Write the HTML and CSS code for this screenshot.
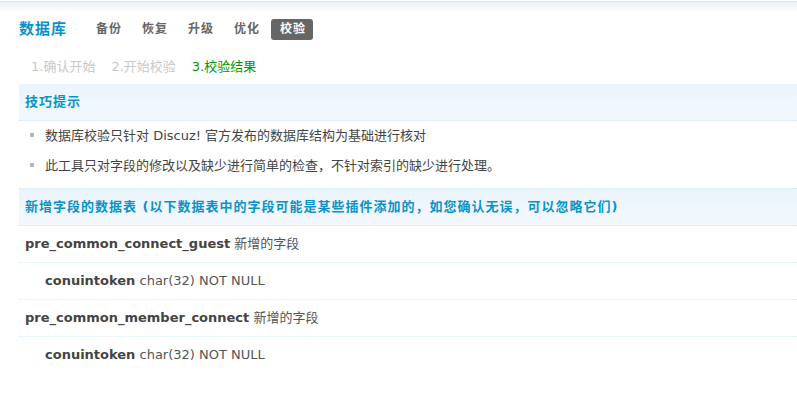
FILE: index.html
```html
<!DOCTYPE html>
<html lang="zh-CN">
<head>
<meta charset="utf-8">
<title>数据库 - 校验</title>
<link rel="stylesheet" href="styles.css">
</head>
<body>
<div class="topband"></div>
<div class="container">
  <div class="itemtitle">
    <h3 class="title">数据库</h3>
    <ul class="tabs">
      <li><a class="tab" href="#">备份</a></li>
      <li><a class="tab" href="#">恢复</a></li>
      <li><a class="tab" href="#">升级</a></li>
      <li><a class="tab" href="#">优化</a></li>
      <li><a class="tab current" href="#">校验</a></li>
    </ul>
  </div>
  <ul class="steps">
    <li class="step">1.确认开始</li>
    <li class="step">2.开始校验</li>
    <li class="step done">3.校验结果</li>
  </ul>
  <div class="partition first">技巧提示</div>
  <ul class="tips">
    <li>数据库校验只针对 Discuz! 官方发布的数据库结构为基础进行核对</li>
    <li>此工具只对字段的修改以及缺少进行简单的检查，不针对索引的缺少进行处理。</li>
  </ul>
  <div class="partition second">新增字段的数据表 (以下数据表中的字段可能是某些插件添加的，如您确认无误，可以忽略它们)</div>
  <div class="row"><b>pre_common_connect_guest</b> 新增的字段</div>
  <div class="row sub"><b>conuintoken</b> char(32) NOT NULL</div>
  <div class="row"><b>pre_common_member_connect</b> 新增的字段</div>
  <div class="row sub last"><b>conuintoken</b> char(32) NOT NULL</div>
</div>
</body>
</html>
```
FILE: styles.css
```css
html, body {
  margin: 0;
  padding: 0;
  background: #fff;
}
body {
  font-family: "DejaVu Sans", "Noto Sans CJK SC", sans-serif;
  font-size: 13px;
  color: #444;
}
ul {
  list-style: none;
  margin: 0;
  padding: 0;
}
.topband {
  height: 10px;
  border-top: 1px solid #dde8f3;
  margin-top: 1px;
  background: linear-gradient(#e9f2fa, #ffffff);
}
.container {
  padding-left: 19px;
}
.itemtitle {
  display: flex;
  align-items: center;
  height: 21px;
  margin-top: 7px;
}
.title {
  margin: 0;
  font-size: 15px;
  font-weight: bold;
  letter-spacing: 1px;
  color: #0a93c8;
  line-height: 21px;
}
.tabs {
  display: flex;
  gap: 4px;
  margin-left: 20px;
}
.tab {
  display: block;
  height: 21px;
  line-height: 21px;
  padding: 0 7px 0 9px;
  font-size: 12px;
  font-weight: bold;
  letter-spacing: 1px;
  color: #666;
  text-decoration: none;
  border-radius: 3px;
}
.tab.current {
  background: #666;
  color: #fff;
}
.steps {
  display: flex;
  gap: 16px;
  padding-left: 12px;
  margin-top: 17px;
  height: 20px;
  line-height: 20px;
}
.step {
  color: #c8c8c8;
}
.step.done {
  color: #090;
}
.partition {
  height: 36px;
  line-height: 36px;
  padding-left: 6px;
  font-weight: bold;
  letter-spacing: 1px;
  color: #0a93c8;
  background: linear-gradient(#ebf4fc, #f3f8fd);
  border-bottom: 1px dotted #d6e7f5;
}
.partition.first {
  margin-top: 7px;
}
.partition.second {
  border-top: 1px dotted #d6e7f5;
}
.tips {
  padding: 0 0 7px 26px;
}
.tips li {
  line-height: 30px;
  color: #444;
}
.tips li::before {
  content: "";
  display: inline-block;
  width: 4px;
  height: 4px;
  border-radius: 1px;
  background: #b4b4b4;
  margin-left: -15px;
  margin-right: 11px;
  vertical-align: middle;
  position: relative;
  top: -2px;
}
.row {
  height: 36px;
  line-height: 36px;
  padding-left: 6px;
  color: #555;
  border-bottom: 1px dotted #dde9f5;
}
.row b {
  color: #444;
}
.row.sub {
  padding-left: 26px;
}
.row.last {
  border-bottom: none;
}
```
